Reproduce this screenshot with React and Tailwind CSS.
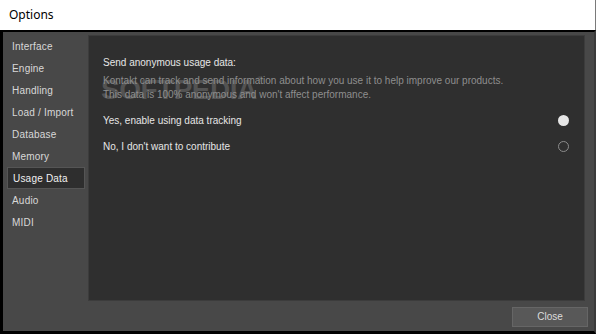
import { useState } from 'react';

const sections = ['Interface', 'Engine', 'Handling', 'Load / Import', 'Database', 'Memory', 'Usage Data', 'Audio', 'MIDI'];

const Radio = ({ checked }) => (
    checked
        ? <span className="w-[11px] h-[11px] rounded-full bg-[#e6e6e6]" />
        : <span className="w-[11px] h-[11px] rounded-full border border-[#8c8c8c]" />
);

const App = () => {
    const [active, setActive] = useState('Usage Data');
    const [tracking, setTracking] = useState(true);

    return (
        <div className="w-[596px] h-[334px] bg-white flex flex-col overflow-hidden" style={{ fontFamily: '"Liberation Sans", Arial, sans-serif' }}>
            {/* Title bar */}
            <div className="h-[30px] flex items-center pl-[9px] text-[12px] text-black bg-white border-r border-[#7a7a7a]" style={{ fontFamily: '"Noto Sans", "Liberation Sans", sans-serif' }}>
                Options
            </div>

            {/* Window body */}
            <div className="flex-1 flex flex-col bg-[#484848] border-t-2 border-l-[3px] border-b-[3px] border-r-2 border-t-black border-l-black border-b-black border-r-[#3a3a3a]">
                <div className="flex flex-1 pt-[3px] pr-[9px]">
                    {/* Sidebar */}
                    <div className="w-[85px] flex flex-col pl-[4px] pr-[3px]">
                        {sections.map(s => (
                            <button
                                key={s}
                                onClick={() => setActive(s)}
                                className={`h-[22px] text-left pl-[5px] text-[10px] tracking-[0.2px] ${active === s ? 'bg-[#2e2e2e] text-[#f0f0f0] border border-[#555]' : 'text-[#d8d8d8]'}`}
                            >
                                {s}
                            </button>
                        ))}
                    </div>

                    {/* Content panel */}
                    <div className="relative flex-1 h-[266px] bg-[#2f2f2f] border border-[#3c3c3c] pl-[14px] pr-[14px] pt-[19px]">
                        {/* watermark */}
                        <div className="absolute left-[12px] top-[40px] text-[28px] leading-none font-bold text-[#535353] tracking-[-0.5px] select-none pointer-events-none" style={{ fontFamily: '"Liberation Sans", sans-serif' }}>
                            SOFTPEDIA<span className="text-[8px] align-top">®</span>
                        </div>
                        <div className="relative text-[10px] text-[#e6e6e6]">Send anonymous usage data:</div>
                        <div className="relative mt-[4px] text-[10px] leading-[14px] text-[#8e8e8e]">
                            <div>Kontakt can track and send information about how you use it to help improve our products.</div>
                            <div>This data is 100% anonymous and won't affect performance.</div>
                        </div>
                        <button onClick={() => setTracking(true)} className="relative mt-[11px] w-full h-[14px] flex items-center justify-between text-[10px] text-[#e6e6e6] pr-[1px]">
                            <span>Yes, enable using data tracking</span>
                            <Radio checked={tracking} />
                        </button>
                        <button onClick={() => setTracking(false)} className="relative mt-[12px] w-full h-[14px] flex items-center justify-between text-[10px] text-[#e6e6e6] pr-[1px]">
                            <span>No, I don't want to contribute</span>
                            <Radio checked={!tracking} />
                        </button>
                    </div>
                </div>

                {/* Footer */}
                <div className="h-[29px] flex items-center justify-end pr-[6px]">
                    <button className="w-[76px] h-[20px] bg-[#585858] border border-[#666] text-[10px] text-[#dcdcdc]">
                        Close
                    </button>
                </div>
            </div>
        </div>
    );
};

export default App;
